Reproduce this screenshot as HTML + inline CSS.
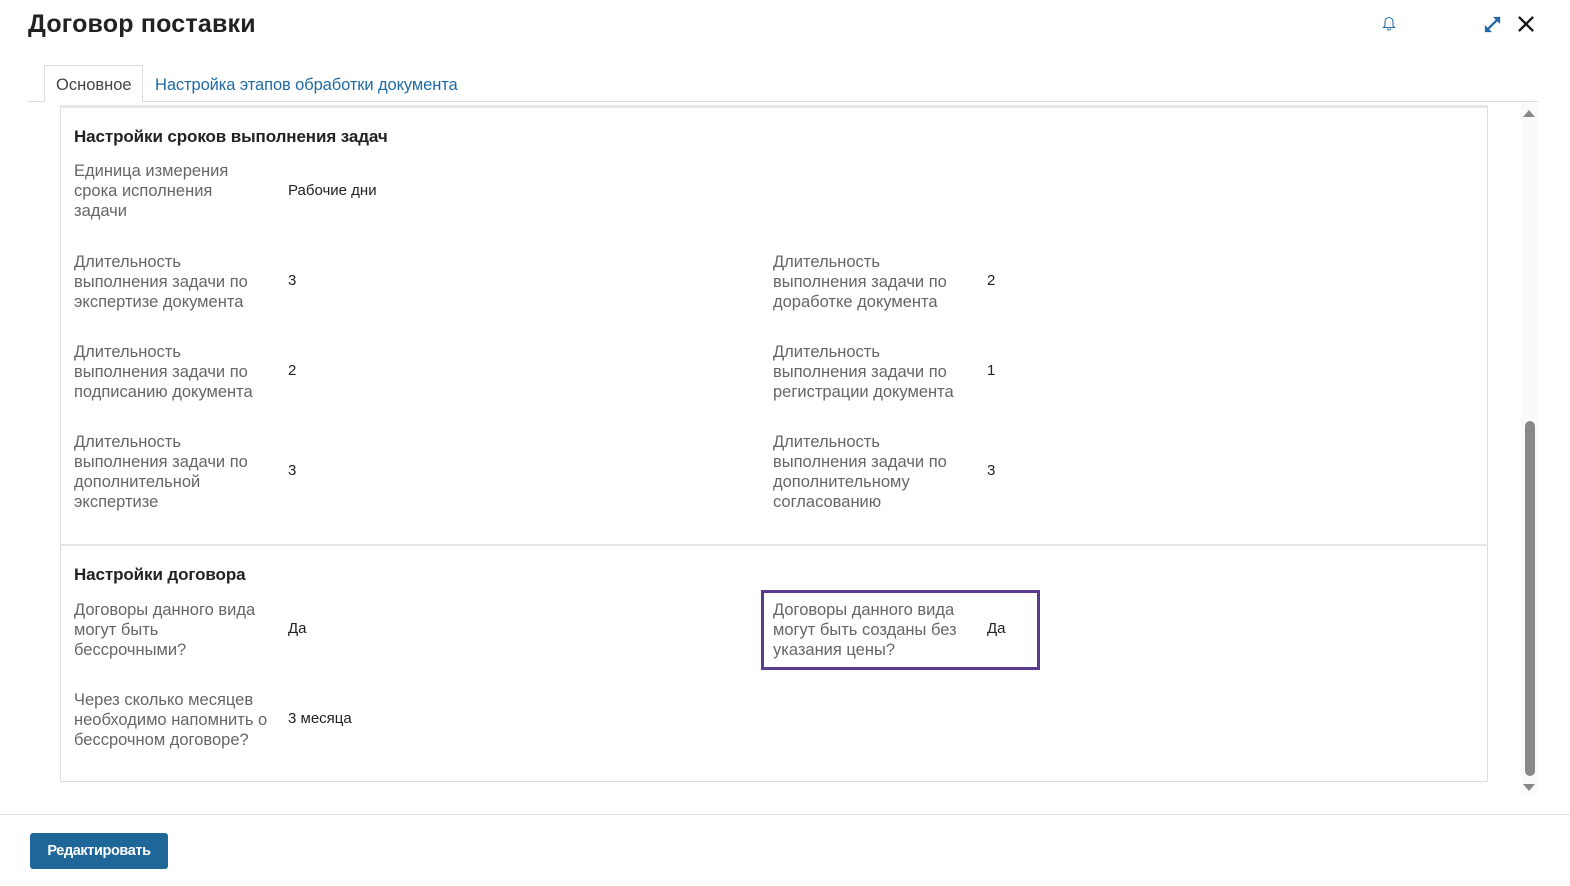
<!DOCTYPE html>
<html><head><meta charset="utf-8"><style>
*{margin:0;padding:0;box-sizing:border-box}
html,body{width:1570px;height:886px;overflow:hidden}
body{background:#fff;font-family:"Liberation Sans",sans-serif;position:relative}
.a{position:absolute;white-space:nowrap}
.l{font-size:16.5px;line-height:20px;color:#666;letter-spacing:0}
.v{font-size:15px;line-height:20px;color:#222}
.h{font-size:17px;font-weight:bold;color:#222;letter-spacing:-0.1px}
</style></head><body>
<div class="a" style="left:28px;top:10px;font-size:25px;font-weight:bold;color:#222;letter-spacing:0.2px">Договор поставки</div>
<svg class="a" style="left:1382px;top:15px" width="14" height="16" viewBox="0 0 14 16"><path d="M3 11V6.5a4 4 0 0 1 8 0V11l1.5 1.5h-11Z M5.5 13.5a1.5 1.5 0 0 0 3 0" fill="none" stroke="#2a6fa8" stroke-width="1.1"/></svg>
<svg class="a" style="left:1483px;top:15px" width="19" height="19" viewBox="0 0 20 20"><path d="M3 17L17 3" stroke="#2067a3" stroke-width="2.4"/><path d="M10.5 2h7.5v7.5Z M2 10.5v7.5h7.5Z" fill="#2067a3"/></svg>
<svg class="a" style="left:1517px;top:15px" width="18" height="18" viewBox="0 0 19 19"><path d="M2 2L17 17M17 2L2 17" stroke="#111" stroke-width="2.4"/></svg>
<div class="a" style="left:28px;top:101px;width:1510px;height:1px;background:#ddd"></div>
<div class="a" style="left:44px;top:65px;width:99px;height:37px;border:1px solid #ddd;border-bottom:none;background:#fff"></div>
<div class="a" style="left:56px;top:76px;font-size:16.5px;color:#444">Основное</div>
<div class="a" style="left:155px;top:76px;font-size:16.5px;color:#1f6aa5;letter-spacing:-0.1px">Настройка этапов обработки документа</div>
<div class="a" style="left:60px;top:105px;width:1428px;height:441px;border:1px solid #ddd;border-top:3px solid #e6e6e6"></div>
<div class="a" style="left:60px;top:544px;width:1428px;height:238px;border:1px solid #ddd;border-top:2px solid #e6e6e6"></div>
<div class="a" style="left:1521px;top:103px;width:17px;height:692px;background:#fafafa"></div>
<div class="a" style="left:1525px;top:421px;width:10px;height:355px;background:#888;border-radius:5px"></div>
<div class="a" style="left:1523px;top:110px;width:0;height:0;border-left:6px solid transparent;border-right:6px solid transparent;border-bottom:7px solid #888"></div>
<div class="a" style="left:1523px;top:784px;width:0;height:0;border-left:6px solid transparent;border-right:6px solid transparent;border-top:7px solid #888"></div>
<div class="a h" style="left:74px;top:127px">Настройки сроков выполнения задач</div>
<div class="a l" style="left:74px;top:161px">Единица измерения<br>срока исполнения<br>задачи</div>
<div class="a v" style="left:288px;top:181px">Рабочие дни</div>
<div class="a l" style="left:74px;top:252px">Длительность<br>выполнения задачи по<br>экспертизе документа</div>
<div class="a v" style="left:288px;top:271px">3</div>
<div class="a l" style="left:773px;top:252px">Длительность<br>выполнения задачи по<br>доработке документа</div>
<div class="a v" style="left:987px;top:271px">2</div>
<div class="a l" style="left:74px;top:342px">Длительность<br>выполнения задачи по<br>подписанию документа</div>
<div class="a v" style="left:288px;top:361px">2</div>
<div class="a l" style="left:773px;top:342px">Длительность<br>выполнения задачи по<br>регистрации документа</div>
<div class="a v" style="left:987px;top:361px">1</div>
<div class="a l" style="left:74px;top:432px">Длительность<br>выполнения задачи по<br>дополнительной<br>экспертизе</div>
<div class="a v" style="left:288px;top:461px">3</div>
<div class="a l" style="left:773px;top:432px">Длительность<br>выполнения задачи по<br>дополнительному<br>согласованию</div>
<div class="a v" style="left:987px;top:461px">3</div>
<div class="a h" style="left:74px;top:565px">Настройки договора</div>
<div class="a l" style="left:74px;top:600px">Договоры данного вида<br>могут быть<br>бессрочными?</div>
<div class="a v" style="left:288px;top:619px">Да</div>
<div class="a" style="left:761px;top:590px;width:279px;height:80px;border:3px solid #5b3b8c"></div>
<div class="a l" style="left:773px;top:600px">Договоры данного вида<br>могут быть созданы без<br>указания цены?</div>
<div class="a v" style="left:987px;top:619px">Да</div>
<div class="a l" style="left:74px;top:690px">Через сколько месяцев<br>необходимо напомнить о<br>бессрочном договоре?</div>
<div class="a v" style="left:288px;top:709px">3 месяца</div>
<div class="a" style="left:0;top:814px;width:1570px;height:1px;background:#e3e3e3"></div>
<div class="a" style="left:30px;top:833px;width:138px;height:36px;background:#1f6699;border-radius:3px;color:#fff;font-size:14.5px;font-weight:bold;line-height:36px;text-align:center;letter-spacing:-0.4px">Редактировать</div>
</body></html>
